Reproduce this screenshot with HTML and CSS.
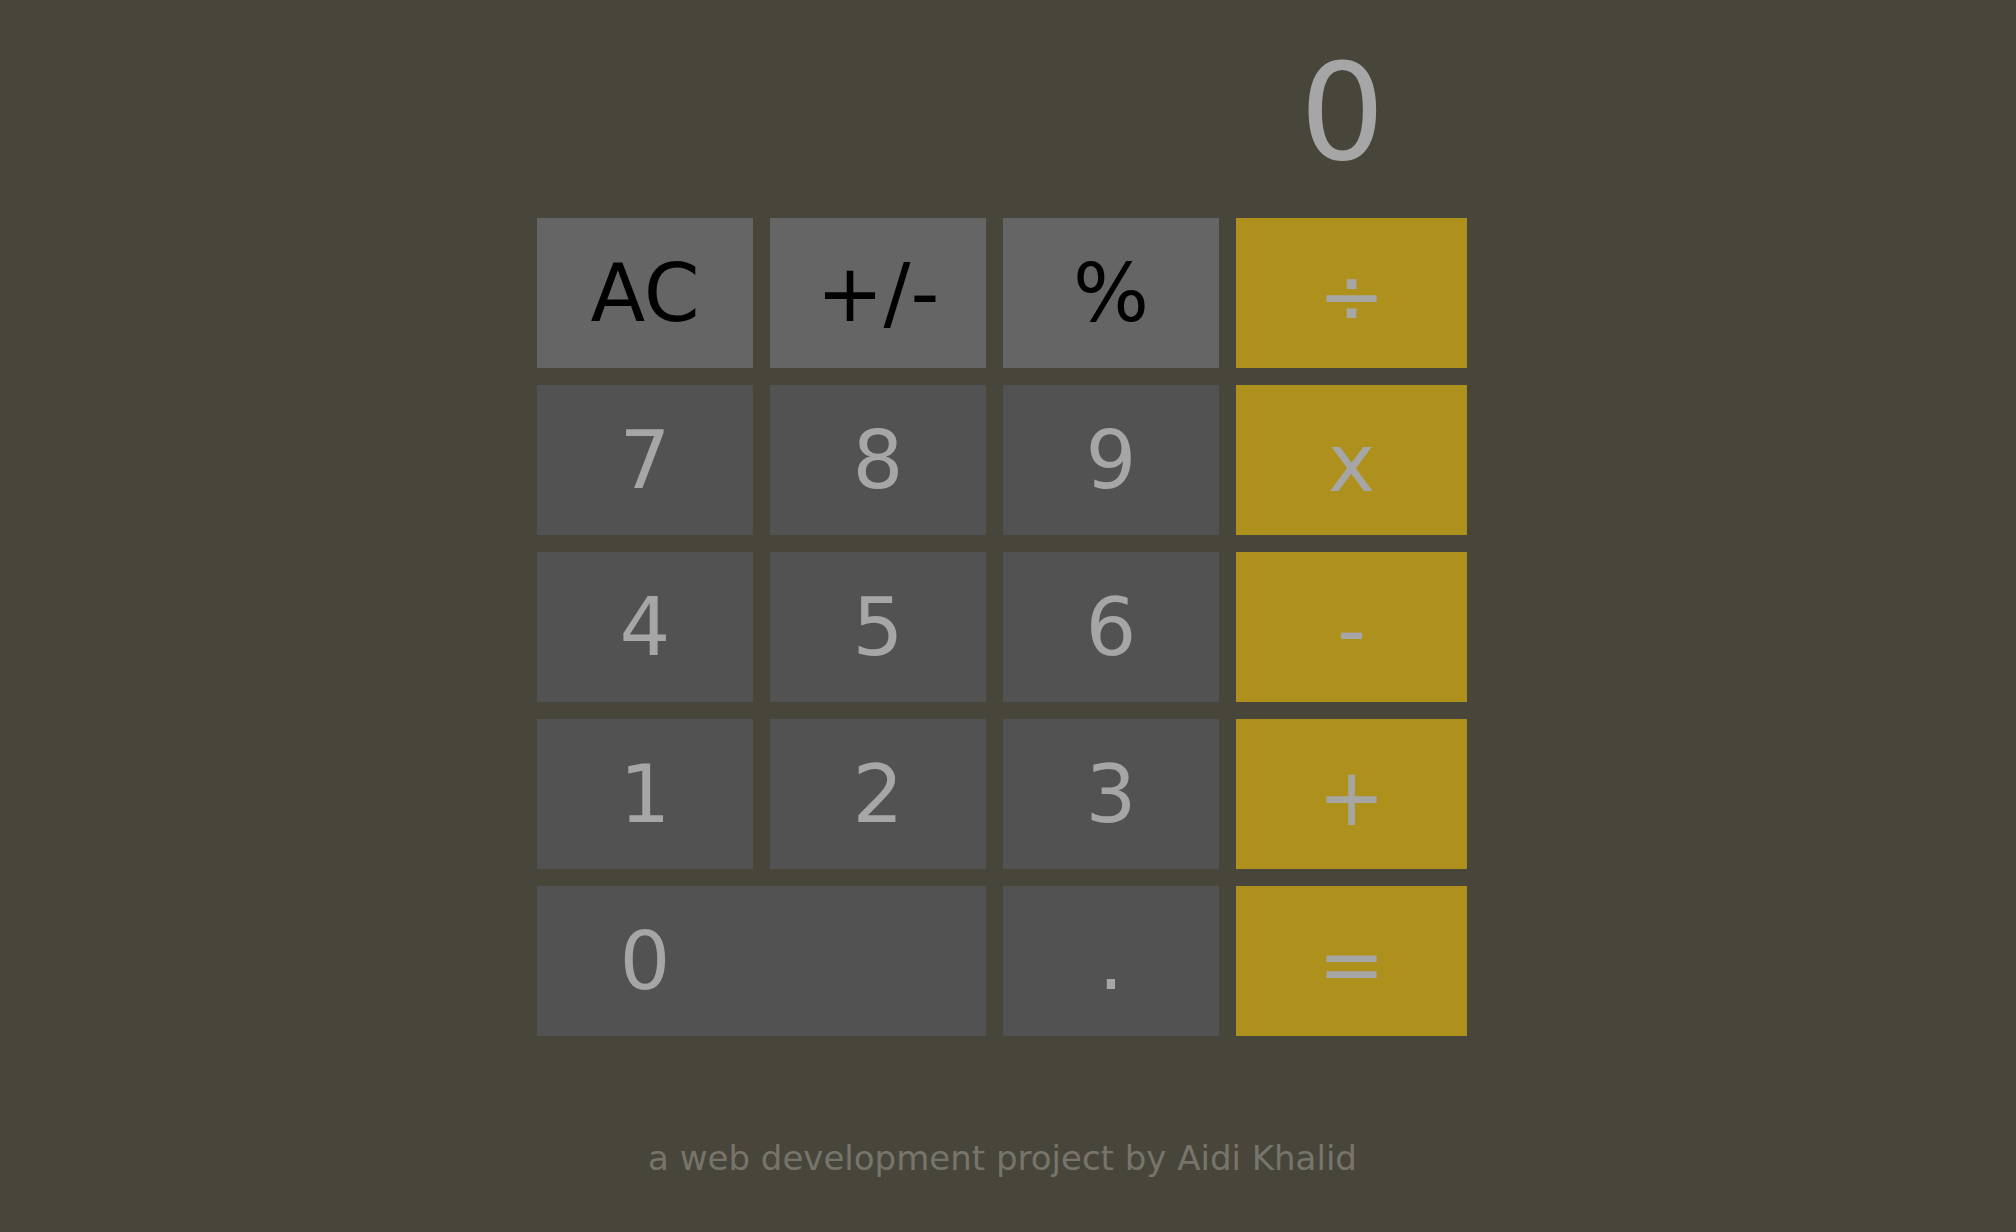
FILE: index.html
```html
<!DOCTYPE html>
<html>
<head>
<meta charset="utf-8">
<title>Calculator</title>
<link rel="stylesheet" href="styles.css">
</head>
<body>
<main class="calculator">
  <div class="display">0</div>
  <div class="keys">
    <button class="key fn">AC</button>
    <button class="key fn">+/-</button>
    <button class="key fn">%</button>
    <button class="key op">÷</button>
    <button class="key num">7</button>
    <button class="key num">8</button>
    <button class="key num">9</button>
    <button class="key op">x</button>
    <button class="key num">4</button>
    <button class="key num">5</button>
    <button class="key num">6</button>
    <button class="key op">-</button>
    <button class="key num">1</button>
    <button class="key num">2</button>
    <button class="key num">3</button>
    <button class="key op">+</button>
    <button class="key num zero">0</button>
    <button class="key num">.</button>
    <button class="key op">=</button>
  </div>
  <p class="credit">a web development project by Aidi Khalid</p>
</main>
</body>
</html>
```

FILE: styles.css
```css
html, body {
  margin: 0;
  padding: 0;
  height: 100%;
}

body {
  background: #48463a;
  font-family: "DejaVu Sans", Verdana, sans-serif;
  display: flex;
  justify-content: center;
  padding-right: 11px;
  box-sizing: border-box;
}

.calculator {
  width: 931px;
  display: flex;
  flex-direction: column;
}

.display {
  height: 218px;
  box-sizing: border-box;
  padding-top: 33px;
  padding-right: 83px;
  text-align: right;
  font-size: 134px;
  line-height: 1.2;
  color: #a6a6a6;
}

.keys {
  display: grid;
  grid-template-columns: 216px 216px 216px 231px;
  grid-auto-rows: 150px;
  column-gap: 17px;
  row-gap: 17px;
}

.key {
  border: none;
  margin: 0;
  padding: 0;
  font-family: inherit;
  font-size: 80px;
  display: flex;
  align-items: center;
  justify-content: center;
}

.fn {
  background: #656565;
  color: #000;
}

.num {
  background: #525252;
  color: #a6a6a6;
}

.op {
  background: #ae911c;
  color: #a6a6a6;
  padding-top: 6px;
}

.zero {
  grid-column: span 2;
  padding-right: 233px;
}

.credit {
  margin: 102px 0 0;
  text-align: center;
  font-size: 34px;
  color: #77756b;
}
```
